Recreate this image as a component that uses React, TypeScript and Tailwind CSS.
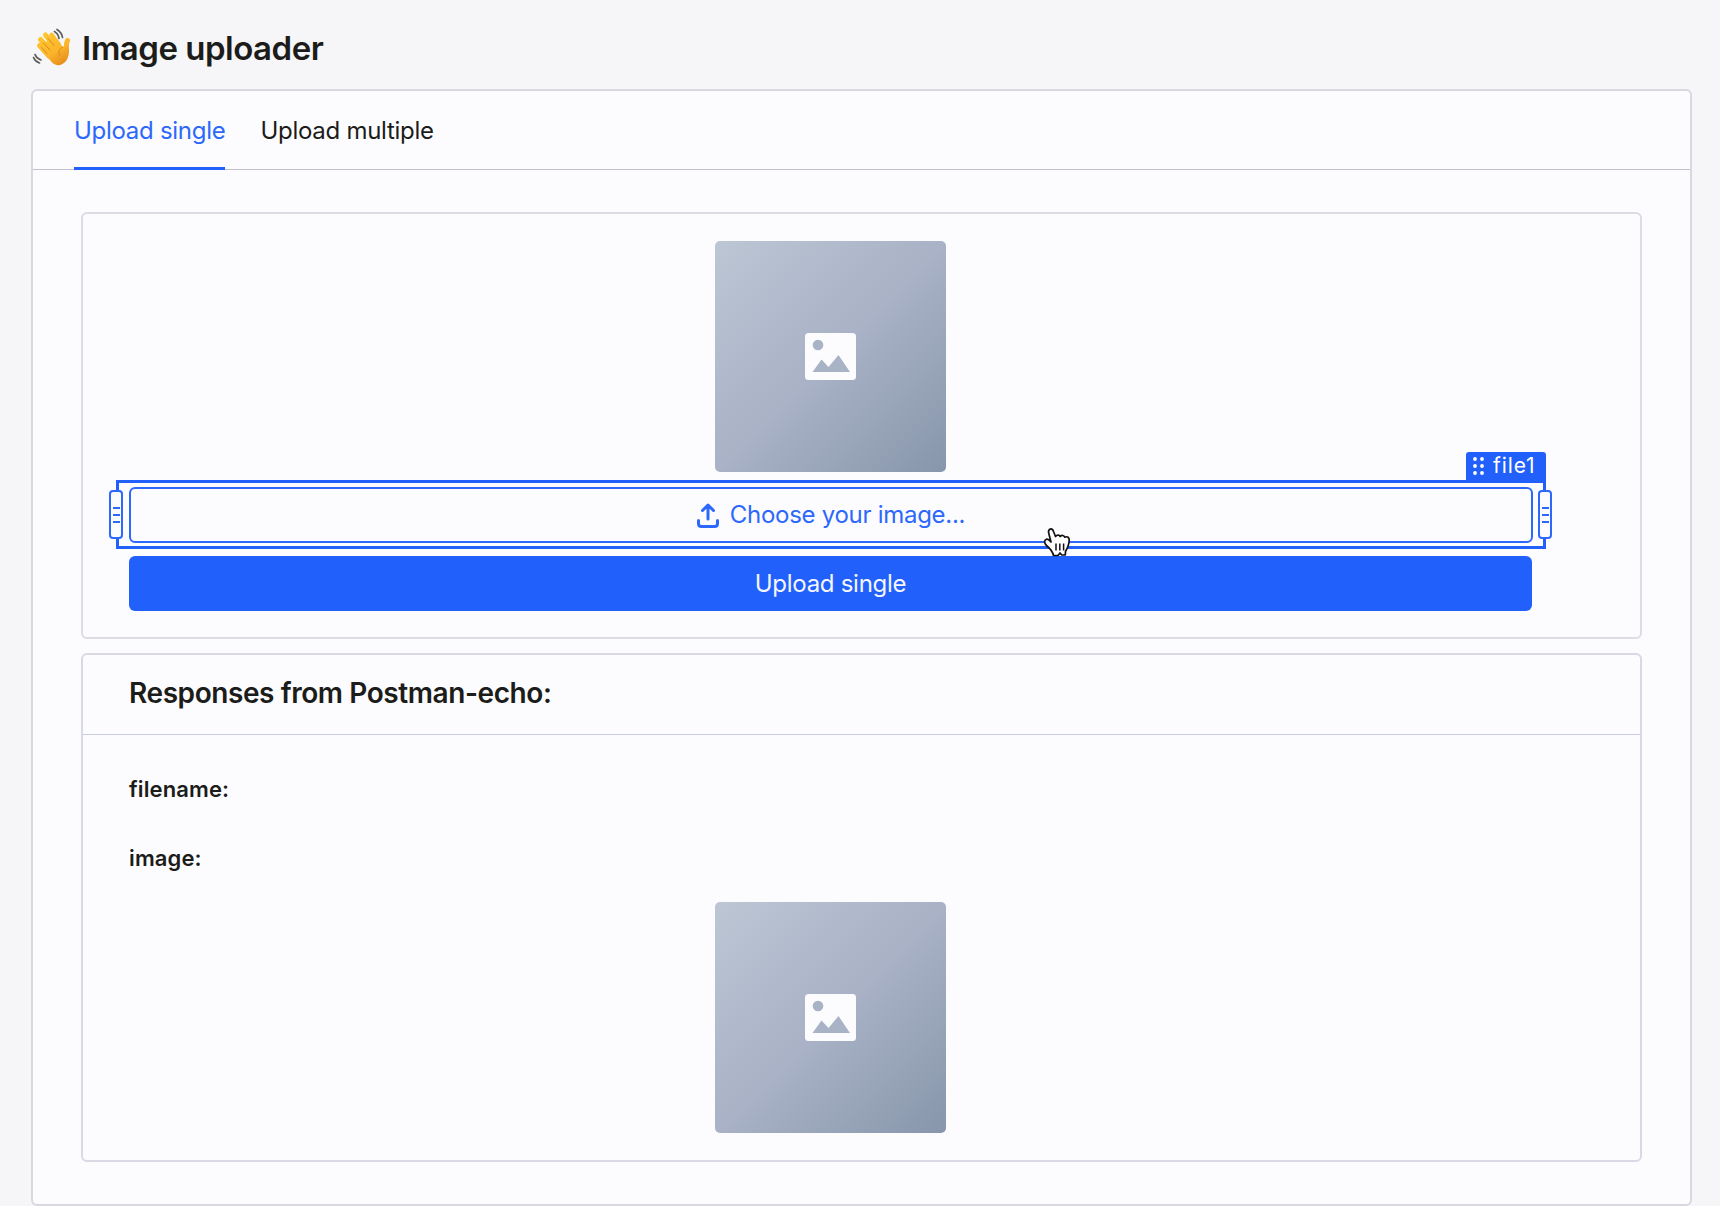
import React from "react";

function WavingHand() {
  return (
    <svg viewBox="0 0 40 40" className="h-10 w-10 shrink-0" fill="none">
      <defs>
        <linearGradient id="skin" x1="8" y1="4" x2="30" y2="38" gradientUnits="userSpaceOnUse">
          <stop stopColor="#ffc92e" />
          <stop offset="0.6" stopColor="#fbb52b" />
          <stop offset="1" stopColor="#e58a1c" />
        </linearGradient>
      </defs>
      <g stroke="url(#skin)" strokeLinecap="round">
        <path d="M7.500 17.500 L17 28" strokeWidth="5" />
        <path d="M8.500 11.500 L20 24" strokeWidth="5" />
        <path d="M13.500 7 L24 20" strokeWidth="5" />
        <path d="M19.500 7 L27 17" strokeWidth="4.600" />
        <path d="M35.500 12.500 C33.500 16 35 20 34 25" strokeWidth="5" />
      </g>
      <path d="M10 18 L18 10 L24 11 C27 15 29 18 31 18.500 L36.500 17 C37.500 24 37 29 34 33 C30 38 24.500 38.500 20 34.500 L8.500 21 Z" fill="url(#skin)" />
      <path d="M11.500 15 L18 22 M16 10.500 L22 17.500 M9.500 19.500 L15 25.500 M30.500 19 C27 21 26 24 27.500 27.500" stroke="#d98a1c" strokeWidth="1" strokeLinecap="round" />
      <path d="M22.500 3.500 C25 5 26.500 7.500 27 10.500 M25 1.500 C28 3.500 30 6 30.500 9.500 M3 26.500 C4 29 6 31 9 32 M1.500 29.500 C2.500 32 4.500 34 7.500 35" stroke="#5c5c5a" strokeWidth="1.700" strokeLinecap="round" />
    </svg>
  );
}

function Placeholder() {
  return (
    <div className="mx-auto flex h-[231px] w-[231px] items-center justify-center rounded-[5px] bg-linear-135 from-[#bcc6d4] via-[#a9b2c6] to-[#8796ab]">
      <svg viewBox="0 0 51 47" className="h-[47px] w-[51px]">
        <rect width="51" height="47" rx="3.500" fill="#fcfcff" />
        <circle cx="13" cy="12" r="5.300" fill="#a8b3c6" />
        <path d="M7.500 39 L16.500 26.500 L23.500 34 L33.500 22 L45 39 Z" fill="#a8b3c6" />
      </svg>
    </div>
  );
}

function Handle({ side }: { side: "left" | "right" }) {
  return (
    <div
      className={
        "absolute top-[7px] flex h-[49px] w-[14px] flex-col items-center justify-center gap-[5px] rounded-[4px] border-2 border-[#2c68fb] bg-[#fcfcff] " +
        (side === "left" ? "-left-[10px]" : "-right-[9px]")
      }
    >
      <span className="h-[2px] w-[7px] bg-[#2c68fb]" />
      <span className="h-[2px] w-[7px] bg-[#2c68fb]" />
      <span className="h-[2px] w-[7px] bg-[#2c68fb]" />
    </div>
  );
}

function PointerCursor() {
  return (
    <svg viewBox="0 0 28 30" className="absolute top-[44px] left-[924px] z-10 h-[30px] w-[28px]">
      <path
        d="M6.500 2.500 C8 1.300 9.800 2 10.500 4.500 L12.500 9.500 C14 7.500 16.500 7.800 17.200 9.500 C18.800 7.800 21 8.300 21.800 10.200 C24.500 9 26.500 10.500 26.200 13.500 C26 18 24.500 21 22.500 24.500 L22.300 28 L18.800 28 L17 26 L15 28.500 L10.500 28.500 C9.500 24 6.500 21 3.500 18.500 C1 16.200 1 13 3.500 12.200 C5.200 11.800 6.500 13 8 15 L5.800 6.500 C5.300 4.800 5.500 3.300 6.500 2.500 Z"
        fill="#fff"
        stroke="#111"
        strokeWidth="1.700"
        strokeLinejoin="round"
      />
      <path d="M13 16.500 V23.500 M16.800 16.500 V23.500 M20.600 16.500 V23.500" stroke="#111" strokeWidth="1.500" />
    </svg>
  );
}

export default function App() {
  return (
    <div className="h-[1206px] overflow-hidden bg-[#f6f6f9] pl-[31px] font-['Inter',sans-serif] text-[#1c1c1a]">
      <header className="flex h-[89px] items-center gap-[10px] pt-[6px] pl-px">
        <WavingHand />
        <h1 className="text-[33px] leading-10 font-semibold tracking-[-0.5px]">Image uploader</h1>
      </header>
      <main className="h-[1117px] w-[1661px] rounded-[6px] border-2 border-[#d8d8e0] bg-[#fcfcff]">
        <nav className="flex h-[79px] gap-[35px] border-b border-[#bfc0d2] pl-[41px] text-2xl tracking-[-0.28px]">
          <button className="h-[79px] border-b-[3px] border-[#2160fb] pt-[3px] text-[#2c68fb]">Upload single</button>
          <button className="h-[79px] border-b-[3px] border-transparent pt-[3px]">Upload multiple</button>
        </nav>
        <div className="pt-[42px] pl-[48px]">
          <section className="h-[427px] w-[1561px] rounded-[6px] border-2 border-[#dcdce5] px-[46px] pt-[27px]">
            <div className="w-[1403px]">
              <Placeholder />
              <div className="relative -ml-[13px] mt-[8px] h-[69px] w-[1430px] border-[3px] border-[#2160fb] px-[10px] pt-[4px]">
                <button className="flex h-[56px] w-full items-center justify-center gap-[11px] rounded-[6px] border-2 border-[#2c68fb] text-2xl tracking-[-0.28px] text-[#2c68fb]">
                  <svg viewBox="0 0 22 25" className="h-[25px] w-[22px]" fill="none" stroke="currentColor" strokeWidth="3" strokeLinecap="round" strokeLinejoin="round">
                    <path d="M11 16 V2.500 M5.500 7.500 L11 2 L16.500 7.500 M1.500 17.500 V20.500 Q1.500 23.500 4.500 23.500 H17.500 Q20.500 23.500 20.500 20.500 V17.500" />
                  </svg>
                  Choose your image...
                </button>
                <Handle side="left" />
                <Handle side="right" />
                <div className="absolute -top-[31px] -right-[3px] flex h-[31px] w-[80px] items-center gap-[9px] rounded-t-[3px] bg-[#2160fb] pb-[3px] pl-[7px] text-[21px] tracking-[0.9px] text-white">
                  <svg viewBox="0 0 11 18" className="h-[18px] w-[11px]" fill="#fff">
                    <circle cx="2" cy="2" r="1.900" /><circle cx="9" cy="2" r="1.900" />
                    <circle cx="2" cy="9" r="1.900" /><circle cx="9" cy="9" r="1.900" />
                    <circle cx="2" cy="16" r="1.900" /><circle cx="9" cy="16" r="1.900" />
                  </svg>
                  file1
                </div>
                <PointerCursor />
              </div>
              <button className="mt-[7px] h-[55px] w-full rounded-[6px] bg-[#2160fb] text-2xl tracking-[-0.28px] text-[#f4f6ff]">Upload single</button>
            </div>
          </section>
          <section className="mt-[14px] h-[509px] w-[1561px] rounded-[6px] border-2 border-[#d8d9e4]">
            <h2 className="flex h-[80px] items-center border-b border-[#c9cce2] pb-[3px] pl-[46px] text-[28px] font-semibold tracking-[-0.42px]">Responses from Postman-echo:</h2>
            <div className="w-[1449px] pl-[46px]">
              <p className="mt-[38px] text-[22px] leading-8 font-semibold tracking-[0.12px]">filename:</p>
              <p className="mt-[37px] text-[22px] leading-8 font-semibold tracking-[0.12px]">image:</p>
              <div className="mt-[28px]">
                <Placeholder />
              </div>
            </div>
          </section>
        </div>
      </main>
    </div>
  );
}
